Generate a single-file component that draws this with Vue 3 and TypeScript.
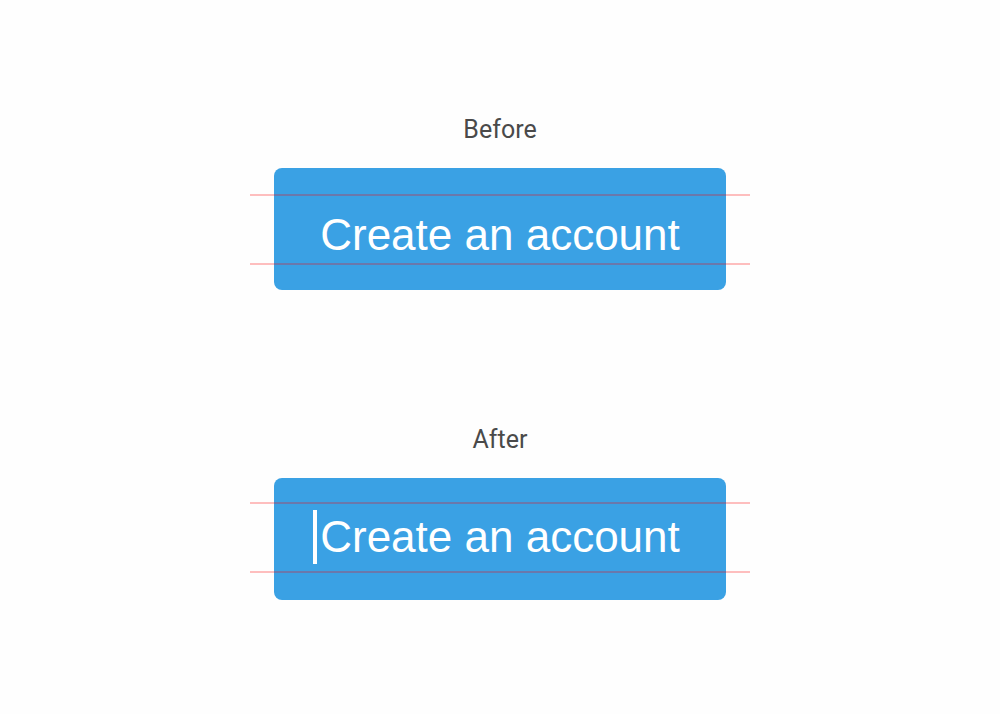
<script setup lang="ts">
interface Example {
  id: string
  title: string
  caret: boolean
}

const label = 'Create an account'
const examples: Example[] = [
  { id: 'before', title: 'Before', caret: false },
  { id: 'after', title: 'After', caret: true },
]
</script>

<template>
  <main class="page">
    <section v-for="example in examples" :key="example.id" class="example" :class="example.id">
      <h2 class="title">{{ example.title }}</h2>
      <div class="stage">
        <button type="button" class="cta">
          <span class="label"><span v-if="example.caret" class="caret" aria-hidden="true"></span>{{ label }}</span>
        </button>
        <span class="guides" aria-hidden="true"></span>
      </div>
    </section>
  </main>
</template>

<style>
body {
  margin: 0;
  background: #fefefe;
}
</style>

<style scoped>
.page {
  box-sizing: border-box;
  min-height: 100vh;
  padding: 114px 24px;
  display: flex;
  flex-direction: column;
  align-items: center;
  gap: 134px;
}

.example {
  display: flex;
  flex-direction: column;
  align-items: center;
}

.title {
  margin: 0 0 22px;
  font: 400 25px/32px Roboto, "Liberation Sans", sans-serif;
  color: #4a4a4a;
}

.stage {
  position: relative;
}

.cta {
  display: block;
  box-sizing: border-box;
  border: 0;
  border-radius: 8px;
  padding: 40px 46px 28px;
  background: #3aa1e4;
  color: #fff;
  font: 400 44px/54px "Helvetica Neue", "Liberation Sans", Arial, sans-serif;
  white-space: nowrap;
}

.after .cta {
  padding: 32px 46px 36px;
}

.label {
  position: relative;
  display: block;
}

.caret {
  position: absolute;
  top: 0;
  bottom: 0;
  left: -7px;
  width: 4px;
  background: #fff;
}

.guides {
  position: absolute;
  top: 26px;
  left: -24px;
  right: -24px;
  height: 67px;
  border: solid rgba(255, 0, 0, 0.25);
  border-width: 2px 0;
  pointer-events: none;
}

.after .guides {
  top: 24px;
}
</style>
